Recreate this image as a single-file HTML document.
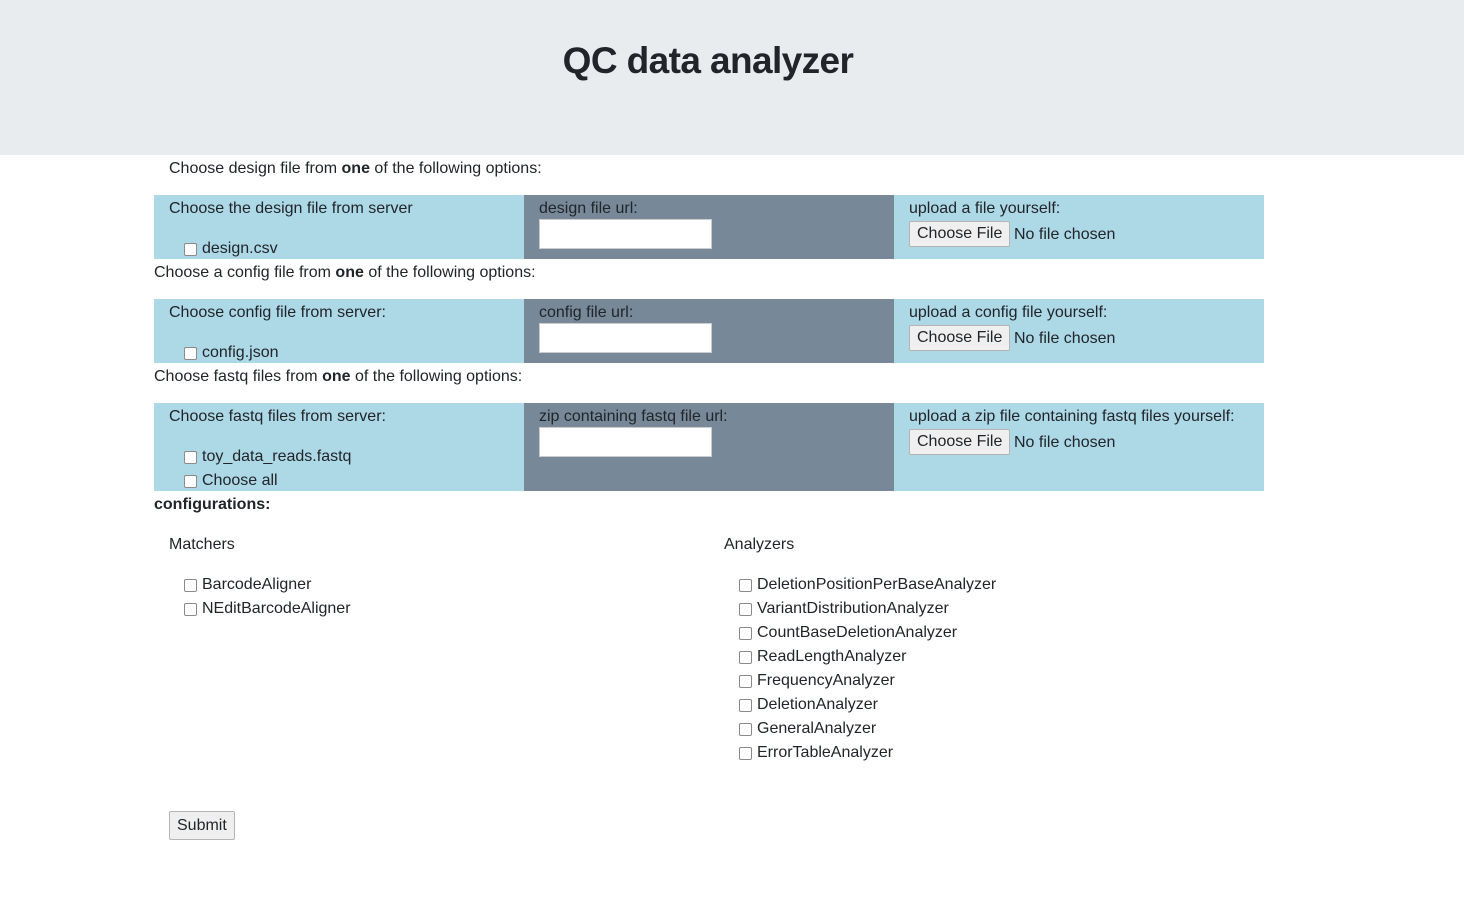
<!DOCTYPE html>
<html><head><meta charset="utf-8"><style>
body{margin:0;width:1464px;height:908px;position:relative;font-family:"Liberation Sans",Arial,sans-serif;font-size:16px;color:#212529;background:#fff;overflow:hidden}
.a{position:absolute;line-height:24px;white-space:nowrap;margin-top:2px}
.hdr{position:absolute;left:0;top:0;width:1464px;height:155px;background:#e9ecef}
h1{position:absolute;left:-24px;width:1464px;top:37px;margin:0;text-align:center;font-size:37px;font-weight:bold;line-height:48px;letter-spacing:-0.6px}
.lb{position:absolute;background:#add8e6}
.gr{position:absolute;background:#778899}
.inp{position:absolute;width:171px;height:28px;background:#fff;border:1px solid #ccc}
.btn{position:absolute;border:1px solid #b5b5b5;background:#efefef;border-radius:2px;line-height:24px;padding:0 7px;box-sizing:border-box;height:26px;margin-top:1px}
.cb{display:inline-block;width:11px;height:11px;border:1px solid #8a8a8a;border-radius:2px;background:#fff;vertical-align:-3px;margin-right:5px}
</style></head><body>
<div class="hdr"></div><h1>QC data analyzer</h1>
<div class="a" style="left:169px;top:155px">Choose design file from <b>one</b> of the following options:</div>

<div class="lb" style="left:154px;top:195px;width:370px;height:64px"></div>
<div class="gr" style="left:524px;top:195px;width:370px;height:64px"></div>
<div class="lb" style="left:894px;top:195px;width:370px;height:64px"></div>
<div class="a" style="left:169px;top:195px">Choose the design file from server</div>
<div class="a" style="left:184px;top:235px"><span class="cb"></span>design.csv</div>
<div class="a" style="left:539px;top:195px">design file url:</div>
<div class="inp" style="left:539px;top:219px"></div>
<div class="a" style="left:909px;top:195px">upload a file yourself:</div>
<div class="btn" style="left:909px;top:220px">Choose File</div>
<div class="a" style="left:1014px;top:221px">No file chosen</div>

<div class="a" style="left:154px;top:259px">Choose a config file from <b>one</b> of the following options:</div>
<div class="lb" style="left:154px;top:299px;width:370px;height:64px"></div>
<div class="gr" style="left:524px;top:299px;width:370px;height:64px"></div>
<div class="lb" style="left:894px;top:299px;width:370px;height:64px"></div>
<div class="a" style="left:169px;top:299px">Choose config file from server:</div>
<div class="a" style="left:184px;top:339px"><span class="cb"></span>config.json</div>
<div class="a" style="left:539px;top:299px">config file url:</div>
<div class="inp" style="left:539px;top:323px"></div>
<div class="a" style="left:909px;top:299px">upload a config file yourself:</div>
<div class="btn" style="left:909px;top:324px">Choose File</div>
<div class="a" style="left:1014px;top:325px">No file chosen</div>

<div class="a" style="left:154px;top:363px">Choose fastq files from <b>one</b> of the following options:</div>
<div class="lb" style="left:154px;top:403px;width:370px;height:88px"></div>
<div class="gr" style="left:524px;top:403px;width:370px;height:88px"></div>
<div class="lb" style="left:894px;top:403px;width:370px;height:88px"></div>
<div class="a" style="left:169px;top:403px">Choose fastq files from server:</div>
<div class="a" style="left:184px;top:443px"><span class="cb"></span>toy_data_reads.fastq</div>
<div class="a" style="left:184px;top:467px"><span class="cb"></span>Choose all</div>
<div class="a" style="left:539px;top:403px">zip containing fastq file url:</div>
<div class="inp" style="left:539px;top:427px"></div>
<div class="a" style="left:909px;top:403px">upload a zip file containing fastq files yourself:</div>
<div class="btn" style="left:909px;top:428px">Choose File</div>
<div class="a" style="left:1014px;top:429px">No file chosen</div>

<div class="a" style="left:154px;top:491px"><b>configurations:</b></div>
<div class="a" style="left:169px;top:531px">Matchers</div>
<div class="a" style="left:184px;top:571px"><span class="cb"></span>BarcodeAligner</div>
<div class="a" style="left:184px;top:595px"><span class="cb"></span>NEditBarcodeAligner</div>
<div class="a" style="left:724px;top:531px">Analyzers</div>
<div class="a" style="left:739px;top:571px"><span class="cb"></span>DeletionPositionPerBaseAnalyzer</div>
<div class="a" style="left:739px;top:595px"><span class="cb"></span>VariantDistributionAnalyzer</div>
<div class="a" style="left:739px;top:619px"><span class="cb"></span>CountBaseDeletionAnalyzer</div>
<div class="a" style="left:739px;top:643px"><span class="cb"></span>ReadLengthAnalyzer</div>
<div class="a" style="left:739px;top:667px"><span class="cb"></span>FrequencyAnalyzer</div>
<div class="a" style="left:739px;top:691px"><span class="cb"></span>DeletionAnalyzer</div>
<div class="a" style="left:739px;top:715px"><span class="cb"></span>GeneralAnalyzer</div>
<div class="a" style="left:739px;top:739px"><span class="cb"></span>ErrorTableAnalyzer</div>
<div class="btn" style="left:169px;top:811px;height:29px;line-height:27px;margin-top:0">Submit</div>
</body></html>
